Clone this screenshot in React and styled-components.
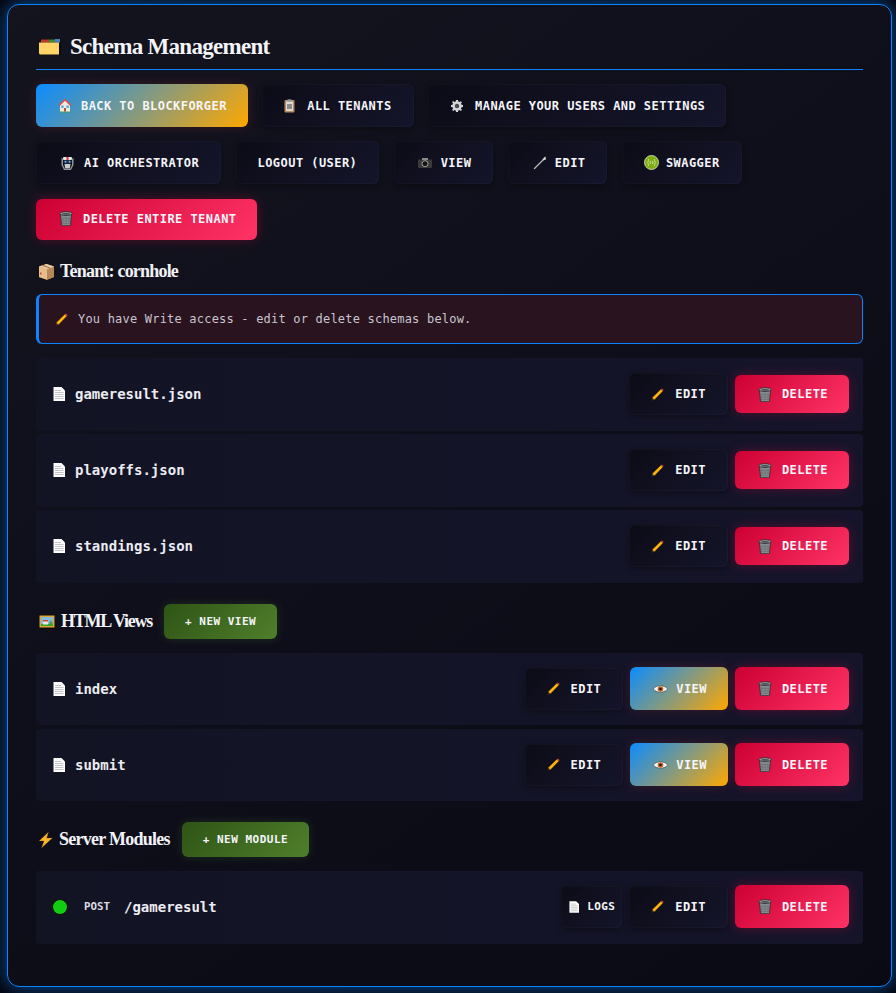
import styled, { createGlobalStyle, css } from "styled-components";

const GlobalStyle = createGlobalStyle`
  html, body {
    margin: 0;
    padding: 0;
    background: #070710;
  }
  body {
    font-family: "DejaVu Sans Mono", "Liberation Mono", monospace;
    color: #e8e8f0;
  }
`;

const Page = styled.div`
  width: 896px;
  height: 993px;
  box-sizing: border-box;
  padding: 4px 4px 6px 7px;
  overflow: hidden;
  background: #05060e;
`;

const Panel = styled.main`
  box-sizing: border-box;
  width: 885px;
  height: 983px;
  padding: 27px 28px 0;
  border: 1px solid #0a84ff;
  border-radius: 12px;
  background: linear-gradient(145deg, #14141f 0%, #0f0f1b 45%, #0a0a14 100%);
  box-shadow: 0 0 18px rgba(10, 132, 255, 0.6);
`;

const Title = styled.h1`
  display: flex;
  align-items: center;
  gap: 8px;
  height: 28px;
  margin: 0 0 14px;
  padding: 1px 0 8px 2px;
  border-bottom: 1px solid #0a84ff;
  font-family: "Liberation Serif", serif;
  font-size: 23px;
  font-weight: 700;
  letter-spacing: -0.7px;
  color: #f4f4f8;
`;

const Toolbar = styled.nav`
  display: flex;
  flex-wrap: wrap;
  gap: 14px 14.4px;
`;

const buttonKinds = {
  dark: css`
    background: linear-gradient(135deg, #0c0c17, #15152b);
    box-shadow: inset 0 0 0 1px rgba(255, 255, 255, 0.025), 0 2px 6px rgba(0, 0, 0, 0.35);
  `,
  primary: css`
    background: linear-gradient(135deg, #0a8cff, #ffa800);
    box-shadow: 0 0 12px rgba(255, 60, 60, 0.16);
  `,
  danger: css`
    background: linear-gradient(135deg, #cc0033, #ff3366);
    box-shadow: 0 0 12px rgba(255, 0, 70, 0.28);
  `,
  green: css`
    background: linear-gradient(135deg, #2f5416, #4f7f2b);
    box-shadow: 0 0 10px rgba(90, 150, 50, 0.22);
  `,
};

const Button = styled.button`
  display: inline-flex;
  align-items: center;
  box-sizing: border-box;
  height: ${(p) => p.$h || 43}px;
  margin-top: ${(p) => p.$nudge || 0}px;
  padding: 0 ${(p) => p.$pad ?? 22}px ${(p) => p.$padB || 0}px ${(p) => p.$padL ?? p.$pad ?? 22}px;
  border: 0;
  border-radius: 6px;
  font-family: "DejaVu Sans Mono", monospace;
  font-size: ${(p) => p.$size || 12}px;
  font-weight: 700;
  letter-spacing: ${(p) => p.$track ?? 0.45}px;
  white-space: nowrap;
  color: #f5f5fa;
  ${(p) => buttonKinds[p.$kind || "dark"]}
`;

const IconSlot = styled.span`
  display: inline-flex;
  align-items: center;
  flex: none;
  width: ${(p) => p.$w || 22}px;
`;

const SectionHead = styled.div`
  display: flex;
  align-items: center;
  height: ${(p) => p.$h || 35}px;
  margin: ${(p) => p.$top || 21}px 0 ${(p) => p.$bottom ?? 14}px;
`;

const SectionTitle = styled.h2`
  display: flex;
  align-items: center;
  gap: ${(p) => p.$gap || 5}px;
  margin: 0 ${(p) => p.$after || 0}px 0 2px;
  font-family: "Liberation Serif", serif;
  font-size: 18px;
  font-weight: 700;
  letter-spacing: ${(p) => p.$track ?? -0.8}px;
  color: #f2f2f6;
`;

const Notice = styled.div`
  display: flex;
  align-items: center;
  gap: 10px;
  box-sizing: border-box;
  height: 50px;
  margin-bottom: 14px;
  padding-left: 16px;
  border: 1px solid #0a84ff;
  border-left-width: 3px;
  border-radius: 6px;
  background: #29131f;
  font-size: 12px;
  letter-spacing: 0.2px;
  color: #c9c5cf;
`;

const List = styled.div`
  display: flex;
  flex-direction: column;
  gap: ${(p) => p.$gap || 3}px;
`;

const Row = styled.div`
  display: flex;
  align-items: center;
  justify-content: space-between;
  box-sizing: border-box;
  height: ${(p) => p.$h || 73}px;
  padding: 0 14px ${(p) => p.$padB || 1}px 17px;
  border-radius: 4px;
  background: linear-gradient(90deg, #121424, #15142a);
`;

const RowName = styled.div`
  display: flex;
  align-items: center;
  gap: 10px;
  font-size: 14px;
  font-weight: 700;
  color: #ecebf2;
`;

const Actions = styled.div`
  display: flex;
  align-items: center;
  gap: 7px;
`;

const StatusDot = styled.span`
  flex: none;
  width: 14px;
  height: 14px;
  margin: 0 6px 0 -1px;
  border: 1px solid #061006;
  border-radius: 50%;
  background: #11cc11;
`;

const Method = styled.span`
  margin-right: 4px;
  font-size: 10.8px;
  font-weight: 700;
  color: #dcdce4;
`;

const Folder = () => (
  <svg width="24" height="18" viewBox="0 0 24 18">
    <rect x="1" y="1" width="22" height="16" rx="1" fill="#0b0b0b" />
    <rect x="3" y="1.5" width="8" height="3" fill="#c0392b" />
    <rect x="11" y="1.5" width="6" height="3" fill="#3d8b37" />
    <rect x="17" y="1" width="5" height="3.500" fill="#4a7ec2" />
    <path d="M1 4.500h20v12H2.500A1.500 1.500 0 0 1 1 15z" fill="#ffd469" />
  </svg>
);

const House = () => (
  <svg width="14" height="15" viewBox="0 0 14 15">
    <rect x="1.500" y="12.500" width="11" height="2" fill="#4c9a50" />
    <path d="M7 1 1 7h1v6.500h10V7h1z" fill="#f3e9dc" />
    <path d="M7 .8.6 7l1 .9L7 2.800l5.400 5.100 1-.9z" fill="#d8433f" />
    <rect x="3.200" y="7.500" width="2.400" height="2.400" fill="#4aa8dc" />
    <rect x="8.400" y="7.500" width="2.400" height="2.400" fill="#4aa8dc" />
    <rect x="6" y="10" width="2" height="3.500" fill="#a3573a" />
  </svg>
);

const Clipboard = () => (
  <svg width="11" height="14" viewBox="0 0 11 14">
    <rect x=".5" y="1" width="10" height="12.500" rx="1" fill="#b98a5e" />
    <rect x="2" y="2.500" width="7" height="9.500" fill="#d9d9d9" />
    <rect x="3" y="5" width="5" height="5" fill="#8a8a8a" />
    <rect x="3.500" y=".3" width="4" height="2.200" fill="#8f9499" />
  </svg>
);

const Gear = () => (
  <svg width="12" height="12" viewBox="0 0 12 12">
    <path
      d="M5 0h2l.3 1.600 1.200.5L9.900 1.200l1 1-.9 1.400.5 1.200L12 5v2l-1.500.3-.5 1.200.9 1.400-1 1-1.400-.9-1.200.5L7 12H5l-.3-1.500-1.200-.5-1.400.9-1-1 .9-1.400-.5-1.200L0 7V5l1.500-.3.5-1.200-.9-1.400 1-1 1.400.9 1.200-.5z"
      fill="#d5d5d8"
    />
    <circle cx="6" cy="6" r="2.200" fill="#4b4b52" />
  </svg>
);

const Robot = () => (
  <svg width="13" height="14" viewBox="0 0 13 14">
    <path d="M.5 1.500 2 3v6l2 4h5l2-4V3l1.500-1.500V9L10 14H3L.5 9z" fill="#8f9498" />
    <rect x="2" y="1" width="9" height="3" rx="1" fill="#e8e8e8" />
    <rect x="5.500" y="1" width="2" height="3" fill="#d63a3a" />
    <rect x="2.500" y="4" width="8" height="3.500" rx="1.500" fill="#1c2b44" />
    <circle cx="4.500" cy="5.700" r="1" fill="#6ab2e8" />
    <circle cx="8.500" cy="5.700" r="1" fill="#6ab2e8" />
    <path d="M3.500 8h6l-.7 4.500H4.200z" fill="#c8cbce" />
  </svg>
);

const Camera = () => (
  <svg width="14" height="10" viewBox="0 0 14 10">
    <rect x="0" y="1.500" width="14" height="8.500" rx="1" fill="#3a3a3a" />
    <rect x="4" y="0" width="6" height="2" fill="#8a8a8a" />
    <circle cx="7" cy="5.700" r="3" fill="#151515" stroke="#bdbdbd" strokeWidth=".8" />
  </svg>
);

const Wrench = () => (
  <svg width="14" height="14" viewBox="0 0 14 14">
    <path d="M1.500 12.500 11 3" stroke="#b8b8b8" strokeWidth="1.300" strokeLinecap="round" />
    <path d="M10 4 12.500 1M11 3.500 13 2.800" stroke="#dcdcdc" strokeWidth="1.200" />
  </svg>
);

const Swagger = () => (
  <svg width="15" height="15" viewBox="0 0 15 15">
    <circle cx="7.500" cy="7.500" r="7" fill="#7fae12" stroke="#e4ebd0" strokeWidth=".8" />
    <path d="M4.800 4c-1 1 .2 2.500-1.300 3.500C5 8.500 3.800 10 4.800 11M10.200 4c1 1-.2 2.500 1.300 3.500-1.500 1-.3 2.500-1.300 3.500" fill="none" stroke="#dfe8c0" strokeWidth=".8" />
    <path d="M6.300 6v3M8.700 6v3" stroke="#dfe8c0" strokeWidth=".8" />
  </svg>
);

const Trash = () => (
  <svg width="14" height="15" viewBox="0 0 14 15">
    <path d="M1.500 3.500h11l-1 10.500a1 1 0 0 1-1 .7h-7a1 1 0 0 1-1-.7z" fill="#858c8f" stroke="#26292b" strokeWidth=".8" />
    <ellipse cx="7" cy="2.600" rx="6.200" ry="1.900" fill="#9aa1a4" stroke="#26292b" strokeWidth=".8" />
    <ellipse cx="7" cy="2.900" rx="4" ry=".9" fill="#4a4f51" />
    <path d="M4 6v6M7 6v6.500M10 6v6M2.500 7.500h9M2.800 10h8.400M3 12.500h8" stroke="#656c6f" strokeWidth=".6" />
  </svg>
);

const Box = () => (
  <svg width="17" height="17" viewBox="0 0 17 17">
    <path d="M8.500 1 16 3.500V14l-7 2.800L1 14V3.500z" fill="#c99a6a" />
    <path d="M1 3.500 9 6.200v10.600L1 14z" fill="#e6bd8c" />
    <path d="M9 6.200 16 3.500V14l-7 2.800z" fill="#b78757" />
    <path d="M1 3.500 8.500 1 16 3.500 9 6.200z" fill="#ead0ad" />
    <path d="M4.500 2.300 12 5" stroke="#a8794b" strokeWidth="1.300" />
    <rect x="2" y="9.500" width="1.500" height="2" fill="#d8433f" />
  </svg>
);

const Pencil = () => (
  <svg width="13" height="13" viewBox="0 0 13 13">
    <path d="M.8 12.200 1.600 9.200 9.800 1.200l2 2L3.800 11.400z" fill="#fdb20e" stroke="#2b2116" strokeWidth=".4" />
    <path d="M.8 12.200 1.400 9.800 3.200 11.600z" fill="#3a2a1c" />
    <path d="M9.800 1.200 10.900.4l1.700 1.700-.8 1.100z" fill="#d4484a" />
  </svg>
);

const Doc = ({ w = 12, h = 14 }) => (
  <svg width={w} height={h} viewBox="0 0 12 14">
    <path d="M.5 0H8.500L12 3.500V14H.5z" fill="#fdfdfd" />
    <path d="M2 3.500h6M2 5.500h8.500M2 7.500h8.500M2 9.500h8.500M2 11.500h8.500" stroke="#bdbdbd" strokeWidth=".9" />
  </svg>
);

const Picture = () => (
  <svg width="18" height="15" viewBox="0 0 18 15">
    <rect x=".5" y=".5" width="17" height="14" fill="#0d0d0d" />
    <rect x="1.500" y="1.500" width="15" height="12" fill="#e0a32c" />
    <rect x="3" y="3" width="12" height="9" fill="#7fbbe0" />
    <path d="M3 12 3 10h12v2z" fill="#34a534" />
    <path d="M11 10 13 6l2 4z" fill="#4e9b4e" />
    <rect x="5" y="7" width="5" height="3.500" fill="#e8e8e8" />
    <rect x="5" y="6" width="5" height="1.500" fill="#d8433f" />
  </svg>
);

const Eye = () => (
  <svg width="15" height="10" viewBox="0 0 15 10">
    <path d="M.3 5C3 .8 12 .8 14.700 5 12 9.200 3 9.200.3 5z" fill="#f4f4f4" stroke="#222" strokeWidth=".5" />
    <circle cx="7.500" cy="5" r="2.800" fill="#c8631d" />
    <circle cx="7.500" cy="5" r="1.300" fill="#1a1a1a" />
  </svg>
);

const Bolt = () => (
  <svg width="15" height="16" viewBox="0 0 15 16">
    <path d="M10.500 0 1 9h5l-2.500 7L14.500 6H8.800z" fill="#f9b52a" stroke="#4a3510" strokeWidth=".3" />
  </svg>
);

const EditButton = () => (
  <Button $h={42} $padL={22} $pad={22}>
    <IconSlot $w={24}><Pencil /></IconSlot>EDIT
  </Button>
);

const DeleteButton = ({ h }) => (
  <Button $kind="danger" $h={h} $padL={23} $pad={21}>
    <IconSlot $w={24}><Trash /></IconSlot>DELETE
  </Button>
);

const ViewButton = () => (
  <Button $kind="primary" $padL={23} $pad={21}>
    <IconSlot $w={23}><Eye /></IconSlot>VIEW
  </Button>
);

const schemas = ["gameresult.json", "playoffs.json", "standings.json"];
const views = ["index", "submit"];

function App() {
  return (
    <Page>
      <GlobalStyle />
      <Panel>
        <Title><Folder />Schema Management</Title>

        <Toolbar>
          <Button $kind="primary" $padL={22} $pad={21}><IconSlot $w={23}><House /></IconSlot>BACK TO BLOCKFORGER</Button>
          <Button><IconSlot $w={23}><Clipboard /></IconSlot>ALL TENANTS</Button>
          <Button $padL={23} $pad={21}><IconSlot $w={24}><Gear /></IconSlot>MANAGE YOUR USERS AND SETTINGS</Button>
          <Button $padL={25} $pad={22}><IconSlot $w={23}><Robot /></IconSlot>AI ORCHESTRATOR</Button>
          <Button>LOGOUT (USER)</Button>
          <Button $padL={24} $pad={22}><IconSlot $w={23}><Camera /></IconSlot>VIEW</Button>
          <Button $padL={25} $pad={22}><IconSlot><Wrench /></IconSlot>EDIT</Button>
          <Button><IconSlot><Swagger /></IconSlot>SWAGGER</Button>
          <Button $kind="danger" $h={41} $nudge={1} $padB={2} $padL={23} $pad={20}><IconSlot $w={24}><Trash /></IconSlot>DELETE ENTIRE TENANT</Button>
        </Toolbar>

        <SectionHead $h={28} $top={17} $bottom={9}>
          <SectionTitle><Box />Tenant: cornhole</SectionTitle>
        </SectionHead>

        <Notice><Pencil />You have Write access - edit or delete schemas below.</Notice>

        <List>
          {schemas.map((name) => (
            <Row key={name}>
              <RowName><Doc />{name}</RowName>
              <Actions>
                <EditButton />
                <DeleteButton h={38} />
              </Actions>
            </Row>
          ))}
        </List>

        <SectionHead>
          <SectionTitle $after={12} $gap={5} $track={-1.25}><Picture />HTML Views</SectionTitle>
          <Button $kind="green" $h={35} $pad={21} $size={11} $track={0.5}>+ NEW VIEW</Button>
        </SectionHead>

        <List $gap={4}>
          {views.map((name) => (
            <Row key={name} $h={72}>
              <RowName><Doc />{name}</RowName>
              <Actions>
                <EditButton />
                <ViewButton />
                <DeleteButton />
              </Actions>
            </Row>
          ))}
        </List>

        <SectionHead>
          <SectionTitle $after={12} $gap={6} $track={-0.75}><Bolt />Server Modules</SectionTitle>
          <Button $kind="green" $h={35} $pad={21} $size={11} $track={0.5}>+ NEW MODULE</Button>
        </SectionHead>

        <List>
          <Row $padB={2}>
            <RowName>
              <StatusDot />
              <Method>POST</Method>
              /gameresult
            </RowName>
            <Actions>
              <Button $h={42} $padL={8} $pad={7} $size={11} $track={0.4}>
                <IconSlot $w={18}><Doc w={10} h={12} /></IconSlot>LOGS
              </Button>
              <EditButton />
              <DeleteButton />
            </Actions>
          </Row>
        </List>
      </Panel>
    </Page>
  );
}

export default App;
